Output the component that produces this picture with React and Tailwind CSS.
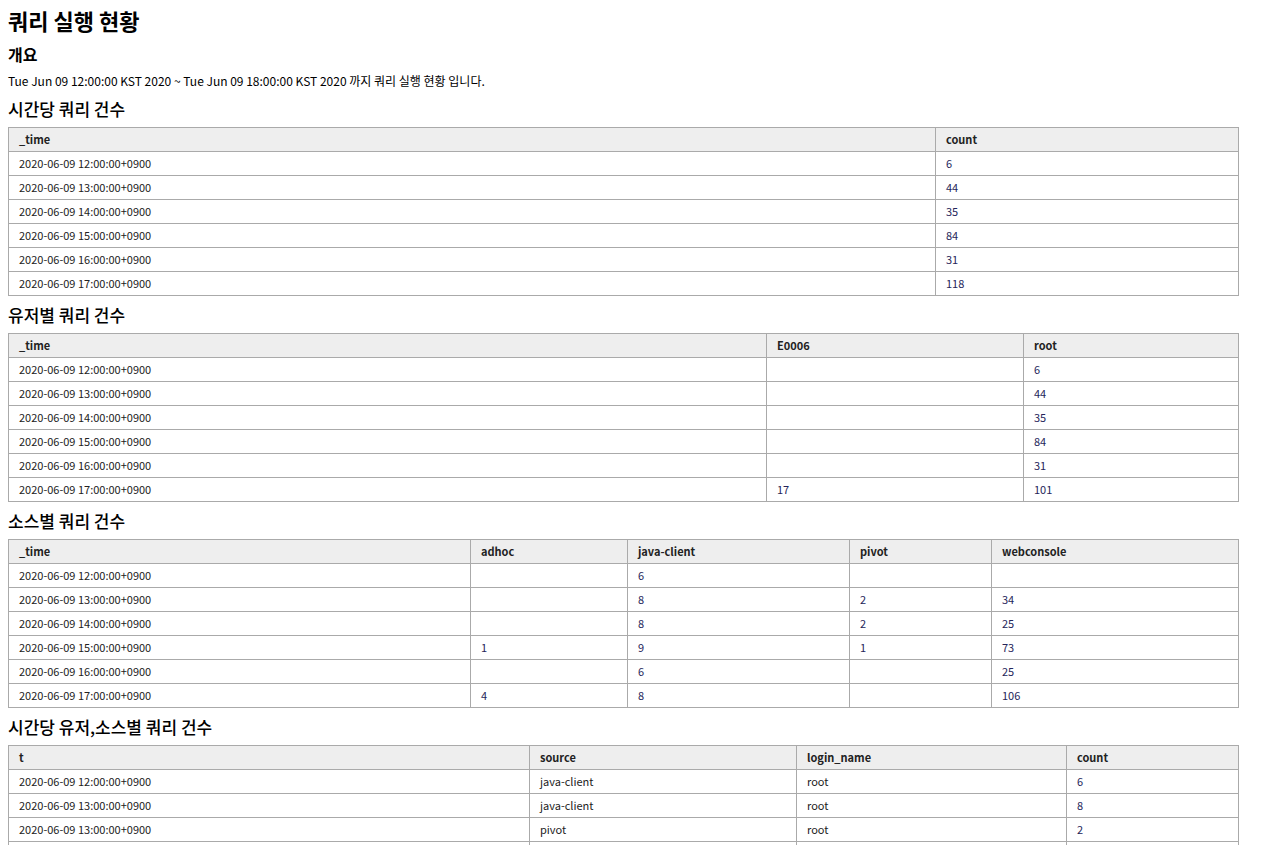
const F = { fontFamily: '"Noto Sans CJK KR","Noto Sans",sans-serif' };

const T = () => [0, 1, 2, 3, 4, 5].map((i) => `2020-06-09 ${12 + i}:00:00+0900`);

function Table({ cols, widths, rows }) {
  return (
    <table className="border-collapse w-[1230px] table-fixed text-[11px] text-[#222]">
      <colgroup>
        {widths.map((w, i) => (
          <col key={i} style={{ width: w }} />
        ))}
      </colgroup>
      <thead>
        <tr className="h-[24px] bg-[#eeeeee]">
          {cols.map((c) => (
            <th key={c} className="border border-[#aaaaaa] text-left font-bold pl-[10px] py-0">{c}</th>
          ))}
        </tr>
      </thead>
      <tbody>
        {rows.map((r, i) => (
          <tr key={i} className="h-[24px]">
            {r.map((c, j) => (
              <td key={j} className={`border border-[#aaaaaa] pl-[10px] py-0 ${j > 0 && /^\d+$/.test(c) ? "text-[#25255a]" : ""}`}>{c}</td>
            ))}
          </tr>
        ))}
      </tbody>
    </table>
  );
}

function H({ children }) {
  return <div className="h-[37px] flex items-center text-[17px] font-medium text-black">{children}</div>;
}

export default function App() {
  const t = T();
  return (
    <div style={F} className="px-[8px] pb-[8px] text-black bg-white">
      <div className="h-[37px] flex items-center text-[22px] font-bold pt-[3px]">쿼리 실행 현황</div>
      <div className="h-[34px] flex items-center text-[16px] font-bold">개요</div>
      <div className="h-[19px] flex items-center text-[12px]">Tue Jun 09 12:00:00 KST 2020 ~ Tue Jun 09 18:00:00 KST 2020 까지 쿼리 실행 현황 입니다.</div>
      <H>시간당 쿼리 건수</H>
      <Table cols={["_time", "count"]} widths={[927, 303]} rows={t.map((x, i) => [x, ["6", "44", "35", "84", "31", "118"][i]])} />
      <H>유저별 쿼리 건수</H>
      <Table cols={["_time", "E0006", "root"]} widths={[758, 257, 215]} rows={t.map((x, i) => [x, i === 5 ? "17" : "", ["6", "44", "35", "84", "31", "101"][i]])} />
      <H>소스별 쿼리 건수</H>
      <Table
        cols={["_time", "adhoc", "java-client", "pivot", "webconsole"]}
        widths={[462, 157, 222, 142, 247]}
        rows={[
          [t[0], "", "6", "", ""],
          [t[1], "", "8", "2", "34"],
          [t[2], "", "8", "2", "25"],
          [t[3], "1", "9", "1", "73"],
          [t[4], "", "6", "", "25"],
          [t[5], "4", "8", "", "106"],
        ]}
      />
      <H>시간당 유저,소스별 쿼리 건수</H>
      <Table
        cols={["t", "source", "login_name", "count"]}
        widths={[521, 267, 270, 172]}
        rows={[
          [t[0], "java-client", "root", "6"],
          [t[1], "java-client", "root", "8"],
          [t[1], "pivot", "root", "2"],
          [t[1], "webconsole", "root", "34"],
          [t[2], "java-client", "root", "8"],
          [t[2], "pivot", "root", "2"],
          [t[2], "webconsole", "root", "25"],
        ]}
      />
    </div>
  );
}
